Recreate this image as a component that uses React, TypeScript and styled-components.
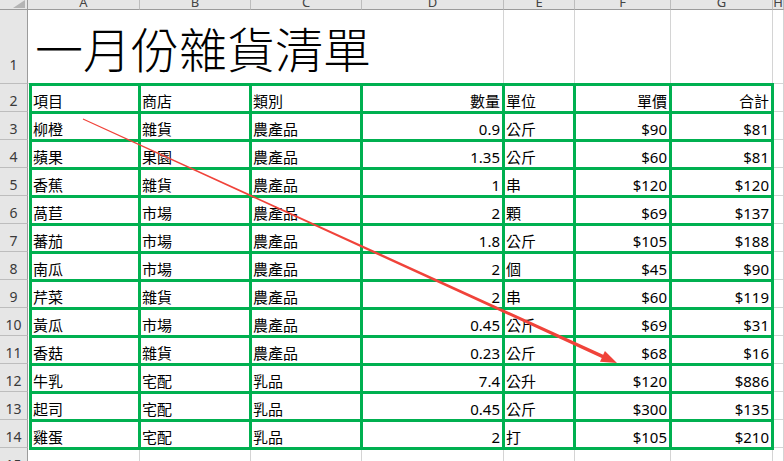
import React from "react";
import styled, { createGlobalStyle } from "styled-components";

const GlobalStyle = createGlobalStyle`
  html, body { margin: 0; padding: 0; background: #ffffff; overflow: hidden; }
  #root { width: 784px; height: 461px; }
`;

const FONT = `"Noto Sans", "Noto Sans CJK TC", sans-serif`;

const Sheet = styled.div`
  position: relative;
  width: 784px;
  height: 461px;
  overflow: hidden;
  display: grid;
  grid-template-columns: 28px 112px 111px 111px 142px 71px 96px 102px 1fr;
  grid-template-rows: 10px 74px repeat(13, 28px) 28px;
  font-family: ${FONT};
  background: #ffffff;
`;

const Corner = styled.div`
  background: #e6e6e6;
  border-right: 1px solid #9b9b9b;
  border-bottom: 1px solid #9b9b9b;
  box-sizing: border-box;
  display: flex;
  justify-content: flex-end;
  align-items: flex-start;
  padding-right: 2px;
`;

const ColHeader = styled.div`
  background: #e6e6e6;
  border-right: 1px solid #bdbdbd;
  border-bottom: 1px solid #9b9b9b;
  box-sizing: border-box;
  overflow: hidden;
  display: flex;
  justify-content: center;
  align-items: flex-end;
  font-size: 13px;
  line-height: 13px;
  color: #444444;
`;

const ColLetter = styled.span`
  display: block;
`;

const RowHeader = styled.div<{ $pb: number }>`
  background: #e6e6e6;
  border-right: 1px solid #9b9b9b;
  border-bottom: 1px solid #bdbdbd;
  box-sizing: border-box;
  display: flex;
  justify-content: center;
  align-items: flex-end;
  padding-bottom: ${(p) => p.$pb}px;
  font-size: 14px;
  line-height: 16px;
  color: #3a3a3a;
`;

const GridCell = styled.div<{ $col?: string }>`
  border-right: 1px solid #d4d4d4;
  border-bottom: 1px solid #d4d4d4;
  box-sizing: border-box;
  grid-column: ${(p) => p.$col || "auto"};
`;

const TitleCell = styled.div`
  grid-column: 2 / 6;
  border-bottom: 1px solid #d4d4d4;
  border-right: 1px solid #d4d4d4;
  box-sizing: border-box;
  display: flex;
  align-items: flex-end;
  padding: 0 0 9px 7px;
  font-family: "Noto Sans CJK TC", sans-serif;
  font-weight: 300;
  font-size: 48px;
  line-height: 54px;
  color: #000000;
  white-space: nowrap;
`;

const DataBlock = styled.div`
  grid-column: 2 / 9;
  grid-row: 3 / 16;
  margin: -1px -1px -2px 1px;
  background: #00b050;
  display: grid;
  grid-template-columns: 106px 108px 108px 139px 68px 93px 99px;
  grid-auto-rows: 25px;
  gap: 3px;
  padding: 3px;
  box-sizing: border-box;
  z-index: 1;
`;

const DataCell = styled.div<{ $right?: boolean }>`
  background: #ffffff;
  display: flex;
  align-items: flex-end;
  justify-content: ${(p) => (p.$right ? "flex-end" : "flex-start")};
  padding: 0 ${(p) => (p.$right ? "2px" : "0")} 0 ${(p) => (p.$right ? "0" : "1px")};
  font-size: 15px;
  line-height: 19px;
  color: #000000;
  white-space: nowrap;
  overflow: hidden;
`;

const Overlay = styled.svg`
  position: absolute;
  left: 0;
  top: 0;
  width: 784px;
  height: 461px;
  pointer-events: none;
  z-index: 5;
`;

const letters = ["A", "B", "C", "D", "E", "F", "G", "H"];

const header = ["項目", "商店", "類別", "數量", "單位", "單價", "合計"];
const rightCols = [3, 5, 6];

const rows: string[][] = [
  ["柳橙", "雜貨", "農產品", "0.9", "公斤", "$90", "$81"],
  ["蘋果", "果園", "農產品", "1.35", "公斤", "$60", "$81"],
  ["香蕉", "雜貨", "農產品", "1", "串", "$120", "$120"],
  ["萵苣", "市場", "農產品", "2", "顆", "$69", "$137"],
  ["蕃茄", "市場", "農產品", "1.8", "公斤", "$105", "$188"],
  ["南瓜", "市場", "農產品", "2", "個", "$45", "$90"],
  ["芹菜", "雜貨", "農產品", "2", "串", "$60", "$119"],
  ["黃瓜", "市場", "農產品", "0.45", "公斤", "$69", "$31"],
  ["香菇", "雜貨", "農產品", "0.23", "公斤", "$68", "$16"],
  ["牛乳", "宅配", "乳品", "7.4", "公升", "$120", "$886"],
  ["起司", "宅配", "乳品", "0.45", "公斤", "$300", "$135"],
  ["雞蛋", "宅配", "乳品", "2", "打", "$105", "$210"],
];

function Arrow() {
  const sx = 83, sy = 119, tx = 617, ty = 363;
  const dx = tx - sx, dy = ty - sy;
  const len = Math.hypot(dx, dy);
  const ux = dx / len, uy = dy / len;
  const nx = -uy, ny = ux;
  const headLen = 16, headHalf = 6, shaftEnd = 1.7, shaftStart = 0.5;
  const bx = tx - ux * headLen, by = ty - uy * headLen;
  const pts = [
    [sx + nx * shaftStart, sy + ny * shaftStart],
    [bx + nx * shaftEnd, by + ny * shaftEnd],
    [bx + nx * headHalf, by + ny * headHalf],
    [tx, ty],
    [bx - nx * headHalf, by - ny * headHalf],
    [bx - nx * shaftEnd, by - ny * shaftEnd],
    [sx - nx * shaftStart, sy - ny * shaftStart],
  ]
    .map((p) => `${p[0].toFixed(2)},${p[1].toFixed(2)}`)
    .join(" ");
  return (
    <Overlay viewBox="0 0 784 461">
      <polygon points={pts} fill="#f0433a" />
    </Overlay>
  );
}

export default function App() {
  return (
    <>
      <GlobalStyle />
      <Sheet>
        <Corner>
          <svg width="12" height="8" viewBox="0 0 12 8">
            <polygon points="0,8 12,8 12,0" fill="#b4b4b4" />
          </svg>
        </Corner>
        {letters.map((l) => (
          <ColHeader key={l}>
            <ColLetter>{l}</ColLetter>
          </ColHeader>
        ))}

        <RowHeader $pb={10}>1</RowHeader>
        <TitleCell>一月份雜貨清單</TitleCell>
        <GridCell />
        <GridCell />
        <GridCell />
        <GridCell />

        {Array.from({ length: 13 }, (_, i) => (
          <React.Fragment key={i}>
            <RowHeader $pb={2} style={{ gridRow: i + 3, gridColumn: 1 }}>
              {i + 2}
            </RowHeader>
            <GridCell style={{ gridRow: i + 3 }} $col="9" />
          </React.Fragment>
        ))}

        <DataBlock>
          {header.map((h, ci) => (
            <DataCell key={"h" + ci} $right={rightCols.includes(ci)}>
              {h}
            </DataCell>
          ))}
          {rows.map((r, ri) =>
            r.map((v, ci) => (
              <DataCell key={ri + "-" + ci} $right={rightCols.includes(ci)}>
                {v}
              </DataCell>
            ))
          )}
        </DataBlock>

        <RowHeader $pb={2} style={{ gridRow: 16, gridColumn: 1 }}>
          15
        </RowHeader>
        {Array.from({ length: 8 }, (_, i) => (
          <GridCell key={"r15-" + i} style={{ gridRow: 16 }} $col={String(i + 2)} />
        ))}
        <Arrow />
      </Sheet>
    </>
  );
}
